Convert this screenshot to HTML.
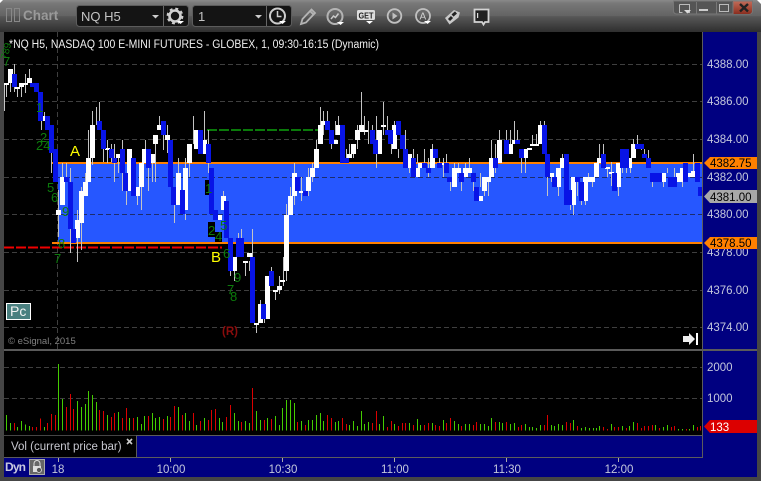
<!DOCTYPE html>
<html>
<head>
<meta charset="utf-8">
<style>
html,body{margin:0;padding:0;background:#444;width:761px;height:481px;overflow:hidden}
svg{display:block;position:absolute;left:0;top:0}
text{font-family:"Liberation Sans",sans-serif}
</style>
</head>
<body>
<svg width="761" height="481" viewBox="0 0 761 481" xmlns="http://www.w3.org/2000/svg">
<defs>
<linearGradient id="tb" x1="0" y1="0" x2="0" y2="1">
<stop offset="0" stop-color="#8a8a8a"/><stop offset=".1" stop-color="#787878"/><stop offset=".5" stop-color="#636363"/><stop offset=".51" stop-color="#585858"/><stop offset="1" stop-color="#2e2e2e"/>
</linearGradient>
<linearGradient id="cl" x1="0" y1="0" x2="0" y2="1"><stop offset="0" stop-color="#c06a58"/><stop offset=".5" stop-color="#a84c3a"/><stop offset="1" stop-color="#8a2e20"/></linearGradient>
</defs>
<rect width="761" height="481" fill="#454545"/>
<rect width="761" height="32" fill="url(#tb)"/>
<!-- window corners -->
<path d="M0 0h3L0 3zM761 0h-4l4 4z" fill="#fff"/>
<!-- title -->
<rect x="6.500" y="8.500" width="5" height="13" fill="none" stroke="#888"/>
<rect x="14.500" y="8.500" width="5" height="13" fill="none" stroke="#888"/>
<text x="23" y="20" font-size="13.500" font-weight="bold" fill="#9a9a9a">Chart</text>
<!-- symbol group -->
<rect x="76.500" y="5.500" width="112" height="21" rx="3" fill="#141414" stroke="#5c5c5c"/>
<line x1="163.500" y1="6" x2="163.500" y2="26" stroke="#666"/>
<text x="81" y="21" font-size="13" fill="#c4c4c4">NQ H5</text>
<path d="M152 15h7l-3.500 3.500z" fill="#ccc"/>
<circle cx="175" cy="16" r="5.500" fill="none" stroke="#d0d0d0" stroke-width="2.600"/>
<circle cx="175" cy="16" r="7.500" fill="none" stroke="#d0d0d0" stroke-width="1.800" stroke-dasharray="3 2.900"/>
<path d="M177 21h7l-3.500 3z" fill="#fff"/>
<rect x="192.500" y="5.500" width="99" height="21" rx="3" fill="#141414" stroke="#5c5c5c"/>
<line x1="266.500" y1="6" x2="266.500" y2="26" stroke="#666"/>
<text x="198" y="21" font-size="13" fill="#c4c4c4">1</text>
<path d="M255 15h7l-3.500 3.500z" fill="#ccc"/>
<circle cx="277.500" cy="16" r="7.500" fill="none" stroke="#ccc" stroke-width="2"/>
<path d="M277.500 11v5.500h4" fill="none" stroke="#ccc" stroke-width="1.500"/>
<path d="M279 21h7l-3.500 3z" fill="#fff"/>
<!-- tool icons -->
<path d="M301 24l1.500-5 9-9.500 3.500 3.500-9 9.500zM310 11l3.500 3.500" fill="none" stroke="#b4b4b4" stroke-width="1.800"/>
<circle cx="335" cy="16.500" r="7.500" fill="none" stroke="#b4b4b4" stroke-width="2"/>
<path d="M331 19l2.500-3 2 1.500 3-4" fill="none" stroke="#c8c8c8" stroke-width="1.500"/>
<path d="M337 22h7l-3.500 3z" fill="#fff"/>
<rect x="357" y="10" width="18" height="10" rx="1.500" fill="#ddd"/>
<text x="358.500" y="18.500" font-size="8" font-weight="bold" fill="#222" textLength="15" lengthAdjust="spacingAndGlyphs">GET</text>
<path d="M366 21h7l-3.500 3z" fill="#fff"/>
<circle cx="394.500" cy="16" r="6.800" fill="none" stroke="#c0c0c0" stroke-width="1.800"/>
<path d="M392.500 12.500l5 3.500-5 3.500z" fill="#c0c0c0"/>
<circle cx="423" cy="16" r="7" fill="none" stroke="#c0c0c0" stroke-width="1.800"/>
<text x="419.500" y="19.500" font-size="10" fill="#d0d0d0">A</text>
<path d="M424 21h7l-3.500 3z" fill="#fff"/>
<path d="M445 18l9-8 6 2.500-1.500 5-9 7z" fill="#c8c8c8"/>
<path d="M449 20l3-3M452.500 15.500l3.500-3" stroke="#222" stroke-width="3"/>
<path d="M474.500 9.500h14v12.500h-3.500l-1.500 2.500-1.500-2.500h-7.500z" fill="#222" stroke="#d4d4d4" stroke-width="1.800"/>
<rect x="477" y="13" width="1.200" height="5" fill="#ddd"/>
<!-- window buttons -->
<path d="M673.500 1v10a3 3 0 0 0 3 3h73a3 3 0 0 0 3-3V1z" fill="#555" stroke="#777"/>
<path d="M733 1.500h19v9.500a3 3 0 0 1-3 3h-16z" fill="url(#cl)"/>
<path d="M696.500 2v12M716.500 2v12M733 2v12" stroke="#777"/>
<path d="M679.500 4.500h10v8h-3M679.500 4.500v8h3" fill="none" stroke="#bbb"/>
<path d="M684 10h7l-3.500 3.500z" fill="#ddd"/>
<rect x="699" y="9" width="9" height="2" fill="#ccc"/>
<rect x="719.500" y="4.500" width="9" height="7" fill="none" stroke="#bbb"/>
<path d="M740 4l8 7.500M748 4l-8 7.500" stroke="#222" stroke-width="2.400"/>

<!-- chart areas -->
<rect x="4" y="32" width="699" height="317" fill="#000"/>
<rect x="703" y="32" width="54" height="445" fill="#000080"/>
<rect x="4" y="351" width="699" height="84" fill="#000"/>
<rect x="4" y="436" width="132" height="21" fill="#000"/>
<rect x="136" y="436" width="567" height="21" fill="#000080"/>
<rect x="4" y="458" width="699" height="19" fill="#000080"/>
<!-- band -->
<rect x="58" y="163" width="645" height="80" fill="#2657ff"/>
<!-- grid -->
<g stroke-dasharray="5 3" fill="none" stroke="#3f3f3f">
<path d="M4 64.500H703M4 101.500H703M4 139.500H703M4 252.500H703M4 290.500H703M4 327.500H703"/>
<path d="M4 177.500H58M4 214.500H58" />
<path d="M58 177.500H703M58 214.500H703" stroke="#1c2c6c"/>
<path d="M57.500 32V349"/>
<path d="M4 367.500H703M4 398.500H703"/>
</g>
<!-- orange lines -->
<rect x="52" y="162" width="651" height="2" fill="#ff8000"/>
<rect x="52" y="242" width="651" height="2" fill="#ff8000"/>
<!-- dashed level lines -->
<path d="M4 247.500H222" stroke="#f00000" stroke-width="2" stroke-dasharray="10 2"/>
<path d="M207 130H322" stroke="#0a7a0a" stroke-width="2" stroke-dasharray="10 2"/>
<!-- digit boxes -->
<rect x="205" y="180" width="5" height="15" fill="#000"/>
<rect x="208" y="222" width="7" height="15" fill="#000"/>
<rect x="215" y="232" width="7" height="10" fill="#000"/>
<!-- wicks -->
<path shape-rendering="crispEdges" fill="none" stroke="#c4c4c4" stroke-width="1" d="M4.500 85V111M6.500 83V97M10.500 83V92M14.500 64V92M17.500 87V97M21.500 87V97M25.500 74V93M29.500 69V78M41.500 121V130M44.500 112V116M51.500 153V173M58.500 190V237M62.500 163V205M66.500 163V177M70.500 168V253M77.500 210V262M81.500 187V250M85.500 173V196M88.500 130V158M92.500 111V165M96.500 107V125M99.500 102V121M103.500 149V162M107.500 140V163M111.500 144V162M114.500 144V182M118.500 158V173M122.500 140V191M126.500 173V205M137.500 187V205M141.500 187V210M145.500 140V149M148.500 168V191M152.500 163V182M155.500 144V182M159.500 116V125M163.500 135V150M167.500 125V153M174.500 205V223M178.500 158V173M185.500 158V168M185.500 214V220M189.500 163V177M193.500 116V144M204.500 111V140M208.500 130V173M223.500 191V196M230.500 271V276M234.500 271V281M238.500 233V238M241.500 229V238M245.500 263V276M249.500 261V271M252.500 229V257M256.500 325V333M260.500 300V304M264.500 319V323M271.500 267V271M275.500 292V300M279.500 276V294M283.500 257V286M286.500 271V281M286.500 204V215M290.500 187V196M294.500 163V205M301.500 177V201M308.500 168V196M312.500 163V182M316.500 140V149M320.500 107V125M323.500 111V135M327.500 111V121M331.500 144V149M335.500 121V135M338.500 116V125M346.500 149V163M349.500 144V158M353.500 144V158M357.500 125V149M361.500 92V125M364.500 116V135M368.500 121V144M372.500 125V130M376.500 116V168M383.500 102V135M387.500 116V130M391.500 144V154M394.500 121V135M398.500 149V158M405.500 130V149M409.500 168V173M413.500 149V158M417.500 154V163M424.500 149V163M428.500 158V177M432.500 144V149M439.500 158V163M443.500 158V177M446.500 154V163M450.500 182V191M454.500 163V168M458.500 163V168M461.500 182V191M465.500 163V168M469.500 158V168M473.500 182V191M480.500 173V187M484.500 191V196M488.500 182V196M491.500 140V158M495.500 144V173M499.500 130V140M506.500 130V140M510.500 130V144M514.500 121V140M517.500 130V140M521.500 158V173M525.500 158V173M532.500 135V144M536.500 134V144M540.500 121V144M544.500 121V130M547.500 177V196M551.500 177V182M558.500 187V196M562.500 154V168M570.500 205V210M573.500 205V215M577.500 182V196M581.500 195V205M585.500 201V205M588.500 173V177M592.500 182V187M599.500 144V163M603.500 144V154M607.500 169V177M611.500 162V186M618.500 187V196M622.500 168V173M626.500 168V173M630.500 168V173M633.500 139V144M637.500 135V144M641.500 149V150M644.500 149V154M648.500 150V158M652.500 182V187M663.500 182V187M667.500 168V173M674.500 168V177M682.500 182V187M693.500 154V173"/>
<!-- bodies -->
<g transform="translate(2.500 0)" fill="none" stroke-width="5" shape-rendering="crispEdges">
<path stroke="#fff" d="M4 83V85M8 69V83M15 87V89M19 83V87M23 83V85M27 78V83M42 116V121M60 177V205M56 210V215M75 220V238M79 191V223M83 182V196M86 158V182M90 125V158M105 148V150M116 154V158M127 149V191M135 187V196M139 163V187M142 149V163M150 154V163M153 135V144M157 125V130M165 135V140M176 173V205M183 168V210M187 144V163M194 130V149M202 140V154M217 215V220M221 196V210M232 257V271M243 261V263M247 253V257M254 323V325M258 304V323M265 276V319M273 290V292M277 286V290M280 280V282M284 215V271M288 196V215M292 173V196M299 191V193M306 177V191M310 168V177M314 149V168M318 125V144M321 121V125M333 140V144M336 125V135M347 154V158M351 144V154M355 130V140M359 125V132M363 130V132M377 130V154M381 125V127M392 125V149M407 154V168M415 168V177M418 163V168M430 149V168M441 163V165M452 168V187M456 168V173M463 168V177M467 168V173M478 196V201M482 177V191M486 177V182M489 158V177M497 140V163M508 144V154M512 140V144M523 149V158M527 148V150M530 144V146M534 144V146M538 125V144M549 173V177M556 168V187M560 158V168M571 177V205M583 177V201M587 177V182M590 177V182M594 163V177M597 158V163M605 167V169M609 172V174M616 163V187M627 158V168M631 144V158M661 173V182M676 173V182M680 168V182M687 173V177M691 171V177"/>
<path stroke="#0814e6" d="M12 74V87M30 83V87M34 83V92M38 92V121M45 116V130M49 125V153M53 149V182M64 177V182M68 182V229M71 229V243M97 121V130M101 130V149M109 149V158M112 158V163M120 149V173M123 173V191M131 158V196M146 149V168M161 121V135M168 140V187M171 187V205M180 190V214M198 130V154M206 144V163M209 168V214M213 210V220M224 201V238M228 238V271M236 238V257M239 238V257M250 257V323M261 304V319M269 271V286M295 177V191M303 191V196M325 121V130M329 130V144M340 125V163M344 158V163M370 130V144M373 140V154M385 130V135M388 130V144M396 121V135M400 135V149M403 149V168M411 158V177M422 163V168M426 168V173M433 149V158M437 163V168M444 163V173M447 177V182M459 173V182M471 173V182M474 187V201M493 158V168M504 140V154M515 140V144M519 149V158M542 125V154M545 154V177M552 177V187M564 154V205M567 190V205M575 177V182M579 182V201M601 154V168M612 173V191M620 149V168M624 149V168M635 144V149M639 144V149M642 154V158M646 158V168M650 173V182M653 173V182M657 173V182M668 177V187M672 177V187M683 163V182M695 163V182M698 187V196"/>
</g>
<!-- digits -->
<g font-size="13" fill="#0c7c0c">
<text x="3" y="66">7</text>
<text x="36" y="112">1</text>
<text x="40" y="142">2</text>
<text x="36" y="150">24</text>
<text x="47" y="192">5</text>
<text x="51" y="202">6</text>
<text x="62" y="216">9</text>
<text x="58" y="248">8</text>
<text x="54" y="263">7</text>
<text x="205" y="193">1</text>
<text x="208" y="235">2</text>
<text x="215" y="241">4</text>
<text x="220" y="230">5</text>
<text x="223" y="258">6</text>
<text x="234" y="282">9</text>
<text x="227" y="294">7</text>
<text x="230" y="301">8</text>
<g transform="translate(7 60) rotate(-75)" font-size="10"><text x="0" y="0">789</text></g>
</g>
<text x="70" y="156" font-size="15" fill="#ffff00">A</text>
<text x="211" y="262" font-size="15" fill="#ffff00">B</text>
<text x="222" y="335" font-size="11.500" font-weight="bold" fill="#8a0c0c">(R)</text>
<!-- header -->
<text x="9" y="48" font-size="11.500" fill="#f0f0f0" textLength="370" lengthAdjust="spacingAndGlyphs">*NQ H5, NASDAQ 100 E-MINI FUTURES - GLOBEX, 1, 09:30-16:15 (Dynamic)</text>
<!-- Pc -->
<rect x="6.500" y="303.500" width="24" height="16" fill="#4a8080" stroke="#fff"/>
<text x="10" y="316" font-size="14" fill="#f2f2f2">Pc</text>
<text x="8" y="344" font-size="9.500" fill="#808080">© eSignal, 2015</text>
<path d="M683 336h6v-3l6 6-6 6v-3h-6z" fill="#eee"/><rect x="696" y="333" width="2" height="12" fill="#fff"/>
<!-- price axis -->
<rect x="702" y="32" width="1" height="425" fill="#5c5c5c"/>
<g font-size="11.500" fill="#c4c8dc">
<text x="707" y="68">4388.00</text>
<text x="707" y="105">4386.00</text>
<text x="707" y="143">4384.00</text>
<text x="707" y="181">4382.00</text>
<text x="707" y="218">4380.00</text>
<text x="707" y="256">4378.00</text>
<text x="707" y="294">4376.00</text>
<text x="707" y="331">4374.00</text>
<text x="707" y="371">2000</text>
<text x="707" y="402">1000</text>
</g>
<path d="M704 163l6-6h47v12h-47z" fill="#ff8000"/>
<text x="710" y="167" font-size="11.500" fill="#000">4382.75</text>
<path d="M704 196.500l6-6.500h47v13h-47z" fill="#a8a8a8"/>
<text x="710" y="201" font-size="11.500" fill="#000">4381.00</text>
<path d="M704 243l6-6h47v12h-47z" fill="#ff8000"/>
<text x="710" y="247" font-size="11.500" fill="#000">4378.50</text>
<!-- separator -->
<rect x="4" y="349" width="753" height="2" fill="#5a5a5a"/>
<!-- volume -->
<g transform="translate(0 345) scale(.33333)" fill="none" stroke-width="3" shape-rendering="crispEdges">
<path stroke="#44cc00" d="M19 210V256M31 234V256M53 246V256M64 228V256M76 238V256M88 243V256M133 246V256M175 57V256M187 162V256M232 168V256M244 186V256M256 177V256M265 138V256M277 150V256M289 171V256M322 210V256M355 201V256M388 219V256M412 216V256M424 237V256M433 213V256M457 204V256M466 219V256M478 216V256M502 213V256M535 186V256M556 204V256M568 228V256M589 240V256M613 219V256M658 219V256M667 231V256M703 204V256M715 228V256M736 228V256M748 234V256M769 198V256M781 225V256M802 219V256M826 213V256M838 240V256M847 189V256M859 165V256M871 165V256M883 174V256M904 228V256M925 225V256M937 225V256M949 210V256M961 204V256M970 228V256M1006 231V256M1015 228V256M1048 240V256M1060 228V256M1072 243V256M1084 198V256M1093 237V256M1105 231V256M1138 237V256M1150 213V256M1183 237V256M1228 234V256M1252 222V256M1261 240V256M1297 234V256M1330 225V256M1363 228V256M1375 237V256M1396 237V256M1408 237V256M1441 237V256M1453 237V256M1465 243V256M1474 219V256M1498 231V256M1507 234V256M1531 237V256M1543 234V256M1576 237V256M1588 246V256M1597 246V256M1609 249V256M1621 240V256M1654 240V256M1663 243V256M1675 237V256M1687 240V256M1720 225V256M1744 249V256M1756 246V256M1768 249V256M1780 249V256M1789 249V256M1798 243V256M1834 237V256M1867 243V256M1888 243V256M1900 231V256M1966 240V256M1990 246V256M2002 240V256M2035 252V256M2047 252V256M2068 252V256M2080 240V256"/>
<path stroke="#dc0000" d="M43 234V256M98 246V256M110 246V256M121 220V256M142 234V256M154 207V256M166 210V256M199 186V256M211 147V256M220 192V256M298 195V256M310 198V256M334 216V256M343 204V256M367 219V256M379 189V256M400 219V256M445 213V256M490 222V256M511 216V256M523 183V256M547 210V256M580 204V256M601 228V256M625 225V256M634 195V256M646 192V256M679 216V256M691 180V256M724 231V256M757 129V256M793 225V256M814 222V256M892 231V256M916 240V256M982 210V256M994 219V256M1027 219V256M1039 237V256M1117 234V256M1129 198V256M1162 246V256M1174 228V256M1195 243V256M1207 234V256M1216 234V256M1240 240V256M1273 240V256M1285 234V256M1306 240V256M1318 243V256M1339 234V256M1351 219V256M1384 243V256M1420 240V256M1429 231V256M1486 231V256M1519 231V256M1555 246V256M1564 240V256M1633 240V256M1642 210V256M1699 231V256M1711 234V256M1732 243V256M1810 246V256M1822 252V256M1843 246V256M1855 246V256M1879 249V256M1912 234V256M1924 249V256M1933 243V256M1945 243V256M1957 240V256M1978 249V256M2014 246V256M2023 243V256M2059 252V256M2092 246V256M2101 243V256"/>
</g>
<!-- panel tag -->
<path d="M704 426.500l6-6.500h47v13h-47z" fill="#dc0000"/>
<text x="710" y="431" font-size="11.500" fill="#fff">133</text>
<!-- legend -->
<rect x="136" y="435" width="567" height="1" fill="#5c5c5c"/>
<rect x="4" y="457" width="699" height="1" fill="#5c5c5c"/>
<rect x="136" y="435" width="1" height="22" fill="#5c5c5c"/>
<text x="11" y="450" font-size="11.500" fill="#c8c8d0">Vol (current price bar)</text>
<path d="M127 439l5 5M132 439l-5 5" stroke="#ccc" stroke-width="1.600"/>
<!-- time axis -->
<text x="5" y="471" font-size="12" font-weight="bold" fill="#c8c8e0" textLength="21">Dyn</text>
<rect x="29.500" y="459.500" width="15" height="15" fill="#666" stroke="#aaa"/>
<path d="M34 466v-2.500a3 3 0 0 1 6 0v2.500" fill="none" stroke="#ddd"/>
<rect x="33" y="466" width="8" height="6" fill="#ddd"/>
<circle cx="39" cy="470" r="2.500" fill="#555" stroke="#ddd" stroke-width=".8"/>
<path d="M58.500 458v4M170.500 458v4M282.500 458v4M394.500 458v4M506.500 458v4M618.500 458v4" stroke="#aaa"/>
<g font-size="11.500" fill="#c4c8dc" text-anchor="middle">
<text x="58" y="473">18</text>
<text x="171" y="473">10:00</text>
<text x="283" y="473">10:30</text>
<text x="395" y="473">11:00</text>
<text x="507" y="473">11:30</text>
<text x="619" y="473">12:00</text>
</g>
</svg>
</body>
</html>
